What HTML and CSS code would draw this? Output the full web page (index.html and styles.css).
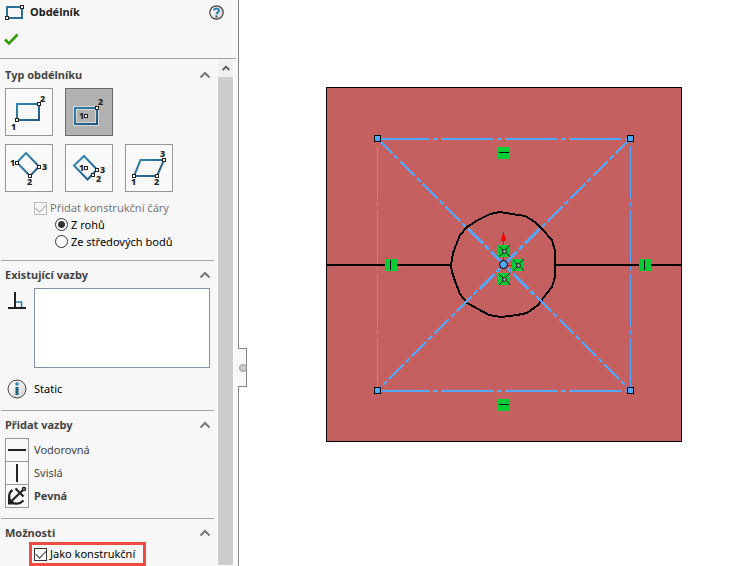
FILE: index.html
```html
<!DOCTYPE html>
<html lang="cs">
<head>
<meta charset="utf-8">
<title>Obdélník</title>
<link rel="stylesheet" href="styles.css">
</head>
<body>
<svg class="defs" width="0" height="0" aria-hidden="true">
  <defs>
    <linearGradient id="steel" gradientUnits="userSpaceOnUse" x1="8" y1="6" x2="36" y2="40">
      <stop offset="0" stop-color="#3a97c4"/><stop offset="1" stop-color="#1c4d70"/>
    </linearGradient>
    <linearGradient id="disc" x1="0" y1="0" x2="1" y2="1">
      <stop offset="0" stop-color="#fff"/><stop offset="1" stop-color="#d4d4d4"/>
    </linearGradient>
    <symbol id="chevron" viewBox="0 0 12 8"><path d="M1.500 6.500 6 2l4.500 4.500" fill="none" stroke="#777" stroke-width="2"/></symbol>
  </defs>
</svg>
<div class="app">
  <aside class="panel">
    <header class="panel-head">
      <div class="title-row">
        <svg class="title-icon" width="20" height="15" viewBox="0 0 20 15">
          <rect x="3" y="2" width="15" height="11" fill="none" stroke="#2a7199" stroke-width="2"/>
          <g fill="#fff" stroke="#222"><rect x="1.500" y="11.500" width="3" height="3"/><rect x="16.500" y=".5" width="3" height="3"/></g>
        </svg>
        <h1>Obdélník</h1>
        <button class="plain help" type="button" aria-label="Nápověda">
          <svg width="15" height="15" viewBox="0 0 15 15"><circle cx="7.500" cy="7.500" r="6.700" fill="url(#disc)" stroke="#444" stroke-width="1.200"/><path d="M5 5.500C5.200 2.800 10 2.800 10 5.400 10 7.200 7.500 7 7.500 9.300" fill="none" stroke="#2980ad" stroke-width="2"/><rect x="6.500" y="10.500" width="2" height="2" fill="#205f86"/></svg>
        </button>
      </div>
      <button class="plain ok" type="button" aria-label="OK">
        <svg width="15" height="13" viewBox="0 0 15 13"><path d="M1 6.500 5 10.500 13.500 1.500" fill="none" stroke="#34990a" stroke-width="2.600"/></svg>
      </button>
    </header>
    <div class="panel-body">
      <div class="sections">
        <section>
          <h2>Typ obdélníku <svg width="12" height="8"><use href="#chevron"/></svg></h2>
          <div class="types">
            <button class="type" type="button" aria-label="Rohový obdélník">
              <svg viewBox="0 0 48 48"><rect x="12" y="16" width="22" height="16" fill="none" stroke="url(#steel)" stroke-width="2"/><g class="pt"><rect x="10.500" y="30.500" width="3" height="3"/><rect x="32.500" y="14.500" width="3" height="3"/></g><text x="6" y="42">1</text><text x="35" y="14">2</text></svg>
            </button>
            <button class="type selected" type="button" aria-label="Středový obdélník">
              <svg viewBox="0 0 48 48"><rect x="10" y="20" width="22" height="16" fill="none" stroke="#d8d8d8" stroke-width="4"/><rect x="10" y="20" width="22" height="16" fill="none" stroke="url(#steel)" stroke-width="2"/><g class="pt"><rect x="19.500" y="26.500" width="3" height="3"/><rect x="30.500" y="18.500" width="3" height="3"/></g><text x="14" y="31">1</text><text x="33" y="17">2</text></svg>
            </button>
          </div>
          <div class="types">
            <button class="type" type="button" aria-label="Rohový obdélník se třemi body">
              <svg viewBox="0 0 48 48"><path d="M21 9 34 22.500 25 32 12 18.500Z" fill="none" stroke="url(#steel)" stroke-width="2"/><g class="pt"><rect x="10.500" y="17.500" width="3" height="3"/><rect x="32.500" y="21.500" width="3" height="3"/><rect x="23.500" y="30.500" width="3" height="3"/></g><text x="5" y="22">1</text><text x="37" y="26">3</text><text x="22" y="41">2</text></svg>
            </button>
            <button class="type" type="button" aria-label="Středový obdélník se třemi body">
              <svg viewBox="0 0 48 48"><path d="M19 12 32 25.500 22.500 35.500 9 21.500Z" fill="none" stroke="url(#steel)" stroke-width="2"/><g class="pt"><rect x="19.500" y="22.500" width="3" height="3"/><rect x="30.500" y="24.500" width="3" height="3"/><rect x="26.500" y="29.500" width="3" height="3"/></g><text x="14" y="27">1</text><text x="35" y="29">3</text><text x="31" y="38">2</text></svg>
            </button>
            <button class="type" type="button" aria-label="Rovnoběžník">
              <svg viewBox="0 0 48 48"><path d="M9 32 15.500 16H39L32 32Z" fill="none" stroke="url(#steel)" stroke-width="2"/><g class="pt"><rect x="7.500" y="30.500" width="3" height="3"/><rect x="30.500" y="30.500" width="3" height="3"/><rect x="37.500" y="14.500" width="3" height="3"/></g><text x="6" y="41">1</text><text x="29" y="41">2</text><text x="35" y="13">3</text></svg>
            </button>
          </div>
          <div class="options">
            <label class="check disabled"><input type="checkbox" checked disabled>Přidat konstrukční čáry</label>
            <label class="radio"><input type="radio" name="lines" checked>Z rohů</label>
            <label class="radio"><input type="radio" name="lines">Ze středových bodů</label>
          </div>
        </section>
        <section>
          <h2>Existující vazby <svg width="12" height="8"><use href="#chevron"/></svg></h2>
          <div class="relations">
            <svg width="18" height="18" viewBox="0 0 18 18"><path d="M0 16h18M7 0v16" stroke="#222" stroke-width="2" fill="none"/><path d="M8 10h5.500v5" stroke="#2c84ac" stroke-width="1.600" fill="none"/></svg>
            <select size="4" aria-label="Existující vazby"></select>
          </div>
          <p class="status">
            <svg width="20" height="20" viewBox="0 0 20 20"><circle cx="10" cy="10" r="9" fill="url(#disc)" stroke="#444"/><circle cx="10" cy="5" r="1.800" fill="#3189b4"/><rect x="8.500" y="8" width="3" height="8" fill="#225f85"/></svg>
            Static
          </p>
        </section>
        <section>
          <h2>Přidat vazby <svg width="12" height="8"><use href="#chevron"/></svg></h2>
          <div class="add">
            <button class="plain" type="button"><svg width="24" height="24" viewBox="1 1 22 22"><path d="M3 12h18" stroke="#222" stroke-width="2"/></svg>Vodorovná</button>
            <button class="plain" type="button"><svg width="24" height="24" viewBox="1 1 22 22"><path d="M12 3v18" stroke="#222" stroke-width="2"/></svg>Svislá</button>
            <button class="plain strong" type="button"><svg width="24" height="24" viewBox="1 1 22 22"><g fill="none" stroke="#222"><path d="M6 17.500 18 6M10.500 4.500 18.500 12.500" stroke-width="2.200"/><circle cx="19" cy="5" r="1.500" stroke-width="1.600"/><path d="M7.500 6Q3 9 4.500 15M9.500 19Q14 21 18.500 16.500" stroke-width="2.200"/></g><path d="M3 12.500V20.500h8.500Z" fill="#222"/></svg>Pevná</button>
          </div>
        </section>
        <section>
          <h2>Možnosti <svg width="12" height="8"><use href="#chevron"/></svg></h2>
          <label class="check marked"><input type="checkbox" checked>Jako konstrukční</label>
        </section>
      </div>
      <div class="scroll"><button class="plain" type="button" aria-label="Nahoru"><svg width="8" height="6" viewBox="0 0 8 6"><path d="M.7 5 4 1.700 7.300 5" fill="none" stroke="#555" stroke-width="1.800"/></svg></button></div>
    </div>
    <button class="grip" type="button" aria-label="Sbalit panel"></button>
  </aside>
  <main>
    <svg class="sketch" viewBox="326 87 356 356">
      <g shape-rendering="crispEdges">
        <rect x="326.500" y="87.500" width="355" height="354" fill="#c46160" stroke="#000"/>
        <path d="M327 265h124M555 265h126" stroke="#000" stroke-width="2"/>
        <path d="M451 265 453 253 456 245 460 235 467 227 478 220 490 214 500 212 512 214 525 216 535 222 542 229 552 240 555 251V277L552 287 547 293 538 305 527 313 517 315 501 317 489 315 478 309 467 303 460 294 455 281 452 272Z" fill="none" stroke="#000" stroke-width="2"/>
        <g fill="none" stroke="#52a8ff" stroke-width="2">
          <path d="M377 139H630M377 391H630" stroke-dasharray="53 3 5 3"/>
          <path d="M377.500 138V390M630.500 138V390" stroke-width="1" stroke-dasharray="5 3 53 3"/>
          <path d="M377.500 138.500 630.500 390.500M630.500 138.500 377.500 390.500" stroke-width="2.300" stroke-dasharray="21 3 5 3"/>
        </g>
        <path d="M503.500 240V265H514" fill="none" stroke="#f00"/>
        <path d="M503.500 232 506.500 241H500.500Z" fill="#f00"/>
        <g fill="#52a8ff" stroke="#000"><rect x="374.500" y="135.500" width="6" height="6"/><rect x="627.500" y="135.500" width="6" height="6"/><rect x="374.500" y="387.500" width="6" height="6"/><rect x="627.500" y="387.500" width="6" height="6"/></g>
        <path fill="#00cc33" d="M498 147h12v12h-12zM498 399h12v12h-12zM385 259h12v12h-12zM639 259h12v12h-12zM498 245h12v12h-12zM512 259h12v12h-12zM498 273h12v12h-12z"/>
        <path d="M499 152.500h10M499 404.500h10M390.500 260v10M644.500 260v10" stroke="#000"/>
      </g>
      <g id="pin"><path d="M499 246l4 4M510 245l-4 4M499 257l4-4M510 257l-3-4" fill="none" stroke="#111"/><circle cx="504.500" cy="251.500" r="2" fill="#999" stroke="#222"/></g>
      <use href="#pin" x="14" y="14"/><use href="#pin" y="28"/>
      <circle cx="503.500" cy="264.500" r="4" fill="#52a8ff" stroke="#000"/>
    </svg>
  </main>
</div>
</body>
</html>
```
FILE: styles.css
```css
* { box-sizing: border-box; }
body { margin: 0; background: #fff; color: #000; font: 11px/16px "Noto Sans", "Open Sans", sans-serif; }
h1, h2, p { margin: 0; }
button, input, select { font: inherit; margin: 0; }
svg { display: block; flex: none; }
.defs { position: absolute; }
.plain { padding: 0; border: 0; background: none; color: inherit; }
.app { display: flex; height: 100vh; }
.panel { position: relative; display: flex; flex-direction: column; flex: none; width: 239px; background: #f7f7f7; border-right: 1px solid #868686; }
.panel-head { height: 59px; margin-right: 2px; padding: 3px 12px 0 4px; border-bottom: 1px solid #a5a5a5; flex: none; }
.title-row { display: flex; align-items: center; height: 18px; gap: 6px; }
h1 { font-size: 11px; line-height: 16px; font-weight: 700; flex: 1; color: #222; }
.ok { display: block; margin-top: 12px; }
.panel-body { display: flex; flex: 1; min-height: 0; margin-right: 4px; }
.sections { flex: 1; min-width: 0; overflow: hidden; padding: 0 3px 0 1px; }
section { border-bottom: 1px solid #a5a5a5; padding: 4px 3px 9px 4px; }
section:first-child { padding-top: 6px; padding-bottom: 10px; }
h2 { display: flex; align-items: center; justify-content: space-between; height: 20px; margin-bottom: 3px; font-size: 11px; line-height: 20px; font-weight: 700; color: #444; }
.types { display: flex; gap: 12px; margin-bottom: 8px; }
.type { width: 48px; height: 48px; padding: 0; border: 1px solid #969696; background: #f9f9f9; }
.type svg { width: 48px; height: 48px; margin: -1px; }
.type.selected { background: #b1b1b1; border-color: #686868; }
.type text { font: 800 9px "Noto Sans", sans-serif; fill: #222; }
.pt { fill: #fff; stroke: #222; }
.options { display: flex; flex-direction: column; align-items: flex-start; padding-left: 29px; }
.check, .radio { display: flex; align-items: center; gap: 3px; white-space: nowrap; }
.check { height: 16px; }
.radio { height: 17px; margin-left: 21px; }
input { appearance: none; width: 13px; height: 13px; flex: none; border: 1px solid #333; background: #fff; }
.check input { display: grid; place-items: center; }
.check input::before { content: ""; width: 9px; height: 5px; margin-bottom: 3px; border: solid #333; border-width: 0 0 1px 1px; rotate: -45deg; }
.disabled { color: #777; }
.disabled input { border-color: #bbb; background: #f7f7f7; }
.disabled input::before { border-color: #aaa; }
.radio input { border-radius: 50%; }
.radio input:checked { background: radial-gradient(circle, #333 0 3px, #fff 4px); }
.relations { display: flex; padding: 0 1px 0 3px; gap: 8px; }
.relations svg { margin-top: 4px; }
select { appearance: none; flex: 1; height: 80px; border: 1px solid #8391a8; border-radius: 0; background: #fff; padding: 0; }
.status { display: flex; align-items: center; gap: 7px; height: 24px; margin-top: 9px; padding-left: 2px; }
.add { display: flex; flex-direction: column; align-items: flex-start; padding-bottom: 1px; }
.add button { display: flex; align-items: center; gap: 5px; color: #444; }
.add button + button { margin-top: -1px; }
.add svg { border: 1px solid #969696; background: #f9f9f9; }
.add .strong { font-weight: 700; }
.marked { width: 117px; height: 24px; margin: -4px 0 0 24px; padding-left: 2px; border: 3px solid #ee4b43; }
section:last-child { border: 0; padding-bottom: 0; }
.scroll { width: 17px; padding-top: 18px; border: 1px solid #fff; border-top-width: 0; background: #cdcdcd; flex: none; }
.scroll button { display: grid; place-items: center; width: 15px; height: 18px; margin-top: -18px; background: #f0f0f0; }
.grip { position: absolute; left: 238px; top: 348px; width: 9px; height: 39px; padding: 0; border: 1px solid #868686; border-left: 0; background: #f7f7f7; }
.grip::before { content: ""; display: block; width: 6px; height: 6px; margin-left: 1px; border: 1px solid #999; border-radius: 50%; background: #ccc; }
main { flex: 1; min-width: 0; padding: 87px 68px 0 87px; }
.sketch { width: 100%; max-width: 356px; height: auto; }
```
